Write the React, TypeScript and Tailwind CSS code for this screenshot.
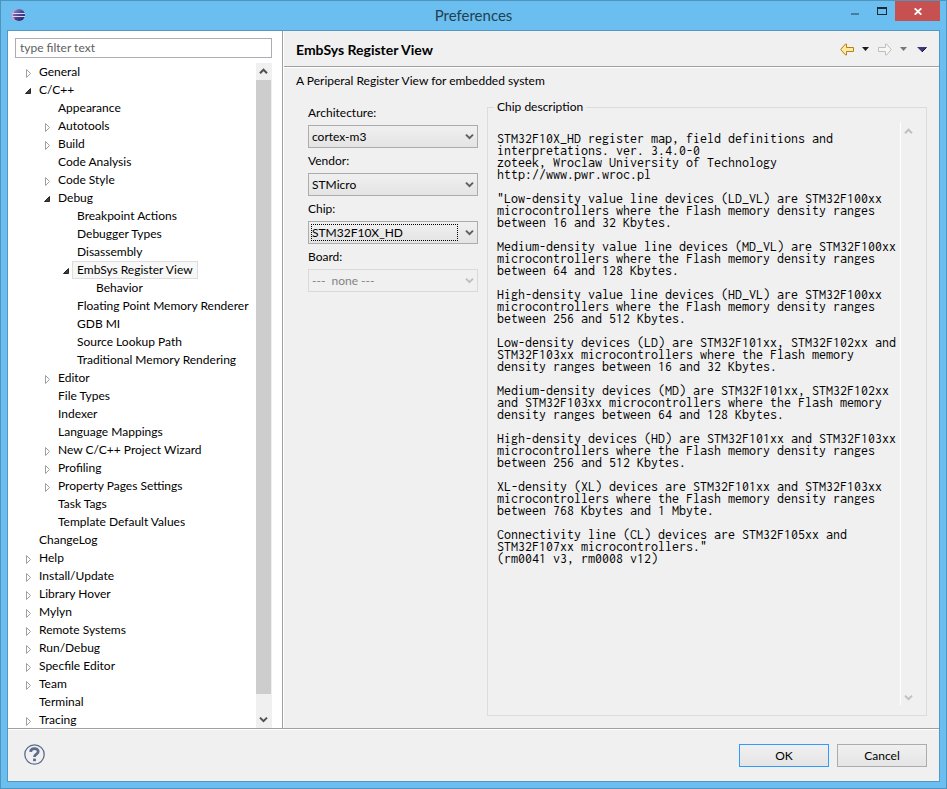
import type { ReactNode } from "react";

type Node = { label: string; level: number; state: "open" | "closed" | "leaf"; selected?: boolean };

const nodes: Node[] = [
  { label: "General", level: 0, state: "closed" },
  { label: "C/C++", level: 0, state: "open" },
  { label: "Appearance", level: 1, state: "leaf" },
  { label: "Autotools", level: 1, state: "closed" },
  { label: "Build", level: 1, state: "closed" },
  { label: "Code Analysis", level: 1, state: "leaf" },
  { label: "Code Style", level: 1, state: "closed" },
  { label: "Debug", level: 1, state: "open" },
  { label: "Breakpoint Actions", level: 2, state: "leaf" },
  { label: "Debugger Types", level: 2, state: "leaf" },
  { label: "Disassembly", level: 2, state: "leaf" },
  { label: "EmbSys Register View", level: 2, state: "open", selected: true },
  { label: "Behavior", level: 3, state: "leaf" },
  { label: "Floating Point Memory Renderer", level: 2, state: "leaf" },
  { label: "GDB MI", level: 2, state: "leaf" },
  { label: "Source Lookup Path", level: 2, state: "leaf" },
  { label: "Traditional Memory Rendering", level: 2, state: "leaf" },
  { label: "Editor", level: 1, state: "closed" },
  { label: "File Types", level: 1, state: "leaf" },
  { label: "Indexer", level: 1, state: "leaf" },
  { label: "Language Mappings", level: 1, state: "leaf" },
  { label: "New C/C++ Project Wizard", level: 1, state: "closed" },
  { label: "Profiling", level: 1, state: "closed" },
  { label: "Property Pages Settings", level: 1, state: "closed" },
  { label: "Task Tags", level: 1, state: "leaf" },
  { label: "Template Default Values", level: 1, state: "leaf" },
  { label: "ChangeLog", level: 0, state: "leaf" },
  { label: "Help", level: 0, state: "closed" },
  { label: "Install/Update", level: 0, state: "closed" },
  { label: "Library Hover", level: 0, state: "closed" },
  { label: "Mylyn", level: 0, state: "closed" },
  { label: "Remote Systems", level: 0, state: "closed" },
  { label: "Run/Debug", level: 0, state: "closed" },
  { label: "Specfile Editor", level: 0, state: "closed" },
  { label: "Team", level: 0, state: "closed" },
  { label: "Terminal", level: 0, state: "leaf" },
  { label: "Tracing", level: 0, state: "closed" },
];

const indents = ["pl-[7px]", "pl-[26px]", "pl-[45px]", "pl-[64px]"];

const description = `STM32F10X_HD register map, field definitions and
interpretations. ver. 3.4.0-0
zoteek, Wroclaw University of Technology
http://www.pwr.wroc.pl

"Low-density value line devices (LD_VL) are STM32F100xx
microcontrollers where the Flash memory density ranges
between 16 and 32 Kbytes.

Medium-density value line devices (MD_VL) are STM32F100xx
microcontrollers where the Flash memory density ranges
between 64 and 128 Kbytes.

High-density value line devices (HD_VL) are STM32F100xx
microcontrollers where the Flash memory density ranges
between 256 and 512 Kbytes.

Low-density devices (LD) are STM32F101xx, STM32F102xx and
STM32F103xx microcontrollers where the Flash memory
density ranges between 16 and 32 Kbytes.

Medium-density devices (MD) are STM32F101xx, STM32F102xx
and STM32F103xx microcontrollers where the Flash memory
density ranges between 64 and 128 Kbytes.

High-density devices (HD) are STM32F101xx and STM32F103xx
microcontrollers where the Flash memory density ranges
between 256 and 512 Kbytes.

XL-density (XL) devices are STM32F101xx and STM32F103xx
microcontrollers where the Flash memory density ranges
between 768 Kbytes and 1 Mbyte.

Connectivity line (CL) devices are STM32F105xx and
STM32F107xx microcontrollers."
(rm0041 v3, rm0008 v12)`;

function Twisty({ state }: { state: Node["state"] }) {
  return (
    <svg className="h-[18px] w-3 shrink-0" viewBox="0 0 12 18" aria-hidden="true">
      {state === "closed" && <path d="M4.5 6.5 L8.5 10.5 L4.5 14.5 Z" fill="#fff" stroke="#a0a0a0" />}
      {state === "open" && <path d="M8.5 7.5 V12.5 H3.5 Z" fill="#404040" stroke="#262626" />}
    </svg>
  );
}

function Chevron({ up = false, className = "" }: { up?: boolean; className?: string }) {
  return (
    <svg className={`h-[7px] w-[9px] ${className}`} viewBox="0 0 9 7" fill="none" stroke="currentColor" strokeWidth="2" aria-hidden="true">
      <path d={up ? "M1 5.2 L4.5 1.7 L8 5.2" : "M1 1.6 L4.5 5.1 L8 1.6"} />
    </svg>
  );
}

function Field({ id, label, value, disabled = false, focused = false }: { id: string; label: string; value: string; disabled?: boolean; focused?: boolean }) {
  return (
    <div className="flex flex-col">
      <label htmlFor={id} className="h-5 leading-4">{label}</label>
      <div className="relative mb-[5px]">
        <select
          id={id}
          disabled={disabled}
          className="block h-[23px] w-full appearance-none border border-[#acacac] bg-linear-to-b from-[#f0f0f0] to-[#e4e4e4] pr-5 pl-[3px] leading-5 whitespace-pre outline-none disabled:border-[#d9d9d9] disabled:bg-none disabled:text-[#838383] disabled:opacity-100"
        >
          <option>{value}</option>
        </select>
        {focused && <span className="pointer-events-none absolute inset-y-[3px] right-5 left-[3px] border border-dotted border-black" />}
        <Chevron className={`pointer-events-none absolute top-2 right-1 ${disabled ? "text-[#bfbfbf]" : "text-[#606060]"}`} />
      </div>
    </div>
  );
}

function ToolButton({ label, children }: { label: string; children: ReactNode }) {
  return <button type="button" aria-label={label} className="flex items-center">{children}</button>;
}

export default function App() {
  return (
    <div className="flex min-h-screen flex-col border border-[#4f94bd] bg-[#6abff0] px-1.5 pb-1.5 font-[Lato,'Open_Sans',sans-serif] text-xs text-black">
      <header className="flex h-[29px] items-start">
        <div className="flex flex-1 pt-[7px] pl-1">
          <svg className="h-[14px] w-[15px]" viewBox="0 0 15 14" aria-hidden="true">
            <defs>
              <linearGradient id="orb" x1="0" y1="0" x2="1" y2="1">
                <stop offset="0" stopColor="#9a96d0" />
                <stop offset="0.5" stopColor="#4a4592" />
                <stop offset="1" stopColor="#241d5a" />
              </linearGradient>
            </defs>
            <circle cx="6.3" cy="7" r="6" fill="#d79cc0" />
            <circle cx="8" cy="7" r="6" fill="url(#orb)" />
            <path d="M1.5 5.5 H14 M1.5 8.5 H14" stroke="#d4d8f4" />
          </svg>
        </div>
        <h1 className="pt-1 pr-1 text-[15px] leading-5 text-[#24404f]">Preferences</h1>
        <div className="flex flex-1 justify-end">
          <button type="button" aria-label="Minimize" className="flex h-5 w-[27px] items-center justify-center">
            <svg className="h-5 w-2" viewBox="0 0 8 20" aria-hidden="true"><path d="M0 12 H8 V14 H0 Z" fill="#4c7b97" /></svg>
          </button>
          <button type="button" aria-label="Maximize" className="flex h-5 w-[27px] items-center justify-center">
            <svg className="h-5 w-[10px]" viewBox="0 0 10 20" aria-hidden="true"><path d="M0 6 H10 V14 H0 Z M1 8 V13 H9 V8 Z" fillRule="evenodd" fill="#1e2a31" /></svg>
          </button>
          <button type="button" aria-label="Close" className="flex h-5 w-[45px] items-center justify-center bg-[#c75050]">
            <svg className="h-[7px] w-2" viewBox="0 0 8 7" aria-hidden="true"><path d="M0.7 0.3 L7.3 6.7 M7.3 0.3 L0.7 6.7" stroke="#fff" strokeWidth="1.8" /></svg>
          </button>
        </div>
      </header>

      <main className="flex flex-1 flex-col border border-[#5298c2] bg-[#f0f0f0]">
        <div className="flex flex-1 border-b border-[#a0a0a0]">
          <nav className="flex w-[275px] shrink-0 flex-col border-r border-[#a0a0a0] bg-white pt-[7px] pr-[10px] pl-[7px]">
            <input
              type="text"
              aria-label="Filter"
              placeholder="type filter text"
              className="h-5 w-full border border-[#abadb3] bg-white px-1 pb-0.5 outline-none placeholder:text-[#606060]"
            />
            <div className="mt-[5px] flex flex-1">
              <ul className="-mb-px min-w-0 flex-1">
                {nodes.map((n) => (
                  <li key={n.label} className={`flex h-[18px] ${indents[n.level]}`}>
                    <Twisty state={n.state} />
                    <span className={`border px-1 leading-4 whitespace-nowrap ${n.selected ? "border-[#dedede] bg-[#f7f7f7]" : "border-transparent"}`}>
                      {n.label}
                    </span>
                  </li>
                ))}
              </ul>
              <div className="flex w-4 flex-col bg-[#f0f0f0] pr-px text-[#505050]">
                <span className="flex h-[17px] items-center justify-center"><Chevron up /></span>
                <span className="flex-1 bg-[#cdcdcd]" />
                <span className="flex h-[34px] items-end justify-center pb-[5px]"><Chevron /></span>
              </div>
            </div>
          </nav>

          <section className="flex min-w-0 flex-1 flex-col border-l border-white">
            <div className="flex h-9 items-center justify-between border-b border-[#a0a0a0] px-3 pt-px">
              <h2 className="pt-px text-sm font-bold">EmbSys Register View</h2>
              <div className="flex items-center">
                <ToolButton label="Back">
                  <svg className="mr-2 h-[13px] w-[14px]" viewBox="0 0 14 13" aria-hidden="true">
                    <path d="M0.7 6.5 L5.5 1 H6.5 V4.5 H13.5 V8.5 H6.5 V12 H5.5 Z" fill="#fdeaa6" stroke="#b97f14" />
                  </svg>
                </ToolButton>
                <ToolButton label="Back history">
                  <svg className="mr-[9px] h-1 w-[7px]" viewBox="0 0 7 4" aria-hidden="true"><path d="M0 0 H7 L3.5 4 Z" fill="#1b1b1f" /></svg>
                </ToolButton>
                <ToolButton label="Forward">
                  <svg className="mr-2 h-[13px] w-[14px]" viewBox="0 0 14 13" aria-hidden="true">
                    <path d="M13.3 6.5 L8.5 1 H7.5 V4.5 H0.5 V8.5 H7.5 V12 H8.5 Z" fill="#f6f6f2" stroke="#bdbdbd" />
                  </svg>
                </ToolButton>
                <ToolButton label="Forward history">
                  <svg className="mr-[10px] h-1 w-[7px]" viewBox="0 0 7 4" aria-hidden="true"><path d="M0 0 H7 L3.5 4 Z" fill="#77777b" /></svg>
                </ToolButton>
                <ToolButton label="Menu">
                  <svg className="h-[5px] w-[10px]" viewBox="0 0 10 5" aria-hidden="true"><path d="M0 0 H10 L5 5 Z" fill="#3d3580" /><path d="M9.5 0.5 L5 5" stroke="#16161c" /></svg>
                </ToolButton>
              </div>
            </div>
            <p className="border-t border-white pt-[5px] pl-3 leading-4">A Periperal Register View for embedded system</p>

            <div className="flex flex-1 gap-[9px] pt-[10px] pr-3 pb-3 pl-6">
              <form className="flex w-[170px] shrink-0 flex-col pt-[6px]">
                <Field id="architecture" label="Architecture:" value="cortex-m3" />
                <Field id="vendor" label="Vendor:" value="STMicro" />
                <Field id="chip" label="Chip:" value="STM32F10X_HD" focused />
                <Field id="board" label="Board:" value={"---\u00a0 none ---"} disabled />
              </form>
              <fieldset className="flex min-w-0 flex-1 flex-col border border-[#dcdcdc]">
                <legend className="ml-[6px] px-[3px] leading-4">Chip description</legend>
                <div className="mt-[7px] mb-[10px] ml-[9px] flex flex-1">
                  <pre className="min-w-0 flex-1 pt-[11px] font-[Inconsolata,'Noto_Sans_Mono_CJK_SC',monospace] text-sm leading-3">{description}</pre>
                  <div className="mr-[10px] flex w-4 flex-col items-center justify-between border-l border-white pt-[6px] pb-1 text-[#bfbfbf]">
                    <Chevron up />
                    <Chevron />
                  </div>
                </div>
              </fieldset>
            </div>
          </section>
        </div>

        <footer className="flex items-start justify-between border-t border-white pt-[14px] pr-3 pb-[14px] pl-4">
          <button type="button" aria-label="Help">
            <svg className="h-[21px] w-[21px]" viewBox="0 0 21 21" fill="none" stroke="#5a6b8c" aria-hidden="true">
              <circle cx="10.5" cy="10.5" r="9.7" strokeWidth="1.3" />
              <path d="M6.6 7.9 C6.8 3.6 14.3 3.6 14.2 7.8 C14.1 10.4 10.6 10 10.5 13" strokeWidth="2.8" />
              <path d="M10.5 14.6 V17.2" strokeWidth="2.8" />
            </svg>
          </button>
          <div className="flex gap-2">
            <button type="button" className="h-[23px] w-[90px] border border-[#3399ff] bg-linear-to-b from-[#f0f0f0] to-[#e5e5e5]">OK</button>
            <button type="button" className="h-[23px] w-[90px] border border-[#acacac] bg-linear-to-b from-[#f0f0f0] to-[#e5e5e5]">Cancel</button>
          </div>
        </footer>
      </main>
    </div>
  );
}
